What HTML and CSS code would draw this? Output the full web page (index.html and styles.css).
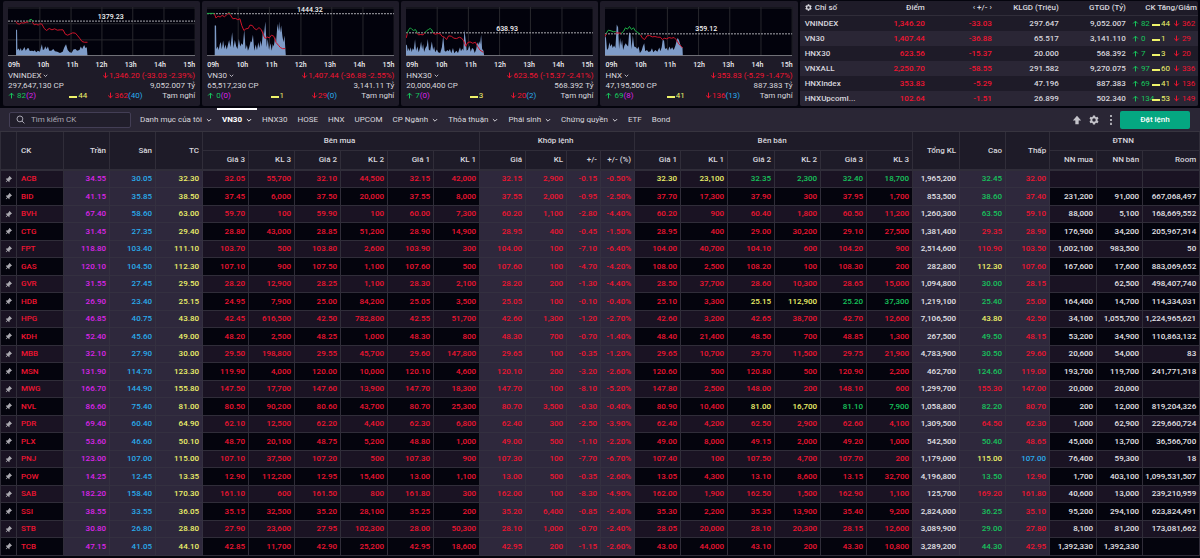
FILE: index.html
```html
<!DOCTYPE html>
<html lang="vi">
<head>
<meta charset="utf-8">
<meta name="viewport" content="width=device-width, initial-scale=1">
<title>Bảng giá VN30</title>
<link rel="stylesheet" href="styles.css">
</head>
<body>
<svg class="sprite" aria-hidden="true">
  <symbol id="up" viewBox="0 0 12 12"><path d="M6 11V2M2 6l4-4 4 4" fill="none" stroke="currentColor" stroke-width="1.7"/></symbol>
  <symbol id="down" viewBox="0 0 12 12"><path d="M6 1v9M2 6l4 4 4-4" fill="none" stroke="currentColor" stroke-width="1.7"/></symbol>
  <symbol id="chevron" viewBox="0 0 10 10"><path d="M1.500 3.500L5 7l3.500-3.500" fill="none" stroke="currentColor" stroke-width="1.600"/></symbol>
  <symbol id="pin" viewBox="0 0 24 24"><path transform="rotate(45 12 12)" d="M17 12V4h1V1H6v3h1v8l-3 3v2h6.800v7h2.400v-7H20v-2z" fill="currentColor"/></symbol>
  <symbol id="gear" viewBox="0 0 24 24"><path fill-rule="evenodd" fill="currentColor" d="M9.500 1h5l.7 3.300 1.900 1.100 3.200-1.100 2.500 4.300L20.300 11v2l2.500 2.400-2.500 4.300-3.200-1.100-1.900 1.100-.7 3.300h-5l-.7-3.300-1.900-1.100-3.200 1.100-2.500-4.300L3.700 13v-2L1.200 8.600l2.500-4.300 3.200 1.100 1.900-1.100zM12 7.800a4.200 4.200 0 1 0 0 8.400 4.200 4.200 0 0 0 0-8.400z"/></symbol>
</svg>

<header class="overview">
  <section class="card">
    <div class="chart">
      <svg viewBox="23 20 558 146" preserveAspectRatio="none">
        <path class="grid" d="M23 23H581M23 70H581M23 118H581M118 20V165M211 20V165M303 20V165M395 20V165M488 20V165M581 20V165"/>
        <path class="volume" d="M47 165V88L50 88 51 148 55 144 58 150 61 142 64 151 68 147 72 139 76 150 80 144 84 142 88 151 95 150 99 152 103 149 107 155 112 150 118 153 121 142 124 131 127 148 131 146 134 137 138 146 142 138 146 150 152 150 158 145 163 152 170 153 178 157 186 153 191 140 196 131 201 148 207 155 213 156 218 147 224 145 229 150 236 148 240 138 244 145 250 133 254 142 258 140 260 165Z"/>
        <path class="reference" d="M23 62H581"/>
        <path class="fall" d="M47 63L51 70 57 71 63 67 70 68 77 65 84 65M96 65L101 73 107 71 113 74 118 70 124 71 131 84 138 90 146 84 154 88 162 85 170 89 179 88 187 88 194 101 201 104 209 100 216 97 224 98 231 106 238 115 244 123 251 125 260 125"/>
        <path class="rise" d="M83 63L88 58 93 57 97 62"/>
        <path class="axis" d="M23 165H581"/>
      </svg>
      <span class="level level-1">1379.23</span>
    </div>
    <div class="hours"><span>09h</span><span>10h</span><span>11h</span><span>12h</span><span>13h</span><span>14h</span><span>15h</span></div>
    <div class="line"><button type="button" class="picker">VNINDEX <svg class="tiny"><use href="#chevron"/></svg></button><span class="r"><svg class="arrow"><use href="#down"/></svg>1,346.20 (-33.03 -2.39%)</span></div>
    <div class="line"><span>297,647,130 CP</span><span>9,052.007 Tỷ</span></div>
    <div class="breadth"><span class="g"><svg class="arrow"><use href="#up"/></svg> 82<span class="m">(2)</span></span><span class="y"><i class="bar"></i>44</span><span class="r"><svg class="arrow"><use href="#down"/></svg>362<span class="b">(40)</span></span><span>Tạm nghỉ</span></div>
  </section>

  <section class="card">
    <div class="chart">
      <svg viewBox="622 20 558 146" preserveAspectRatio="none">
        <path class="grid" d="M622 23H1180M715 20V165M808 20V165M902 20V165M994 20V165M1087 20V165M1180 20V165"/>
        <path class="volume" d="M645 165V75L649 75 650 145 654 138 657 148 660 132 663 124 666 146 670 120 674 145 677 132 681 147 685 130 688 118 692 140 697 95 701 142 705 118 709 137 713 145 717 115 721 138 725 128 729 133 733 88 737 146 741 133 744 150 748 140 752 122 755 125 759 103 763 150 767 132 771 148 775 125 778 142 782 120 785 138 789 86 791 110 796 63 800 140 803 115 807 148 811 128 815 150 818 130 821 138 825 110 828 125 832 70 835 92 837 63 840 96 843 75 847 108 850 125 853 105 857 165Z"/>
        <path class="reference" d="M622 40H1180"/>
        <path class="rise" d="M622 39H644M684 39L688 36 692 40"/>
        <path class="fall" d="M644 40L649 53 655 47 661 50 667 45 674 49 681 43 687 38 692 44 699 55 707 54 714 58 720 55 726 76 732 90 738 85 745 84 750 74 757 75 763 84 770 88 777 81 784 88 790 102 795 114 801 109 808 112 814 104 821 107 828 126 835 134 841 141 847 144 855 144"/>
        <path class="axis" d="M622 165H1180"/>
      </svg>
      <span class="level level-2">1444.32</span>
    </div>
    <div class="hours"><span>09h</span><span>10h</span><span>11h</span><span>12h</span><span>13h</span><span>14h</span><span>15h</span></div>
    <div class="line"><button type="button" class="picker">VN30 <svg class="tiny"><use href="#chevron"/></svg></button><span class="r"><svg class="arrow"><use href="#down"/></svg>1,407.44 (-36.88 -2.55%)</span></div>
    <div class="line"><span>65,517,230 CP</span><span>3,141.11 Tỷ</span></div>
    <div class="breadth"><span class="g"><svg class="arrow"><use href="#up"/></svg> 0<span class="m">(0)</span></span><span class="y"><i class="bar"></i>1</span><span class="r"><svg class="arrow"><use href="#down"/></svg>29<span class="b">(0)</span></span><span>Tạm nghỉ</span></div>
  </section>

  <section class="card">
    <div class="chart">
      <svg viewBox="22 20 558 146" preserveAspectRatio="none">
        <path class="grid" d="M22 23H580M115 20V165M208 20V165M301 20V165M393 20V165M487 20V165M580 20V165"/>
        <path class="volume" d="M22 165V132L25 135 27 152 30 142 33 152 36 140 39 154 42 143 45 148 49 116 52 150 56 138 60 155 64 140 67 123 70 146 73 130 76 154 80 142 84 136 87 115 90 147 94 150 99 123 103 148 106 138 109 155 114 147 118 155 124 157 129 140 133 106 137 150 141 153 145 148 149 152 153 145 157 158 162 142 166 158 172 150 177 157 183 140 186 152 190 144 193 150 196 88 200 120 203 150 207 147 211 135 215 153 219 142 223 145 227 157 231 147 235 125 238 133 240 122 243 130 246 103 249 145 253 150 255 165Z"/>
        <path class="reference" d="M22 97H580"/>
        <path class="fall" d="M23 112L26 99M54 97L59 103 66 102 73 103 78 97M102 97L109 101 117 99 124 100 130 108 137 110 143 117 149 106 157 107 165 113 173 114 181 110 188 113 194 121 200 137 206 126 213 124 221 128 229 125 235 137 243 149 253 155"/>
        <path class="rise" d="M26 97L30 88 35 82 40 87 45 90 50 87 56 97M78 97L83 91 89 87 94 84 99 88 102 97"/>
        <path class="axis" d="M22 165H580"/>
      </svg>
      <span class="level level-3">638.93</span>
    </div>
    <div class="hours"><span>09h</span><span>10h</span><span>11h</span><span>12h</span><span>13h</span><span>14h</span><span>15h</span></div>
    <div class="line"><button type="button" class="picker">HNX30 <svg class="tiny"><use href="#chevron"/></svg></button><span class="r"><svg class="arrow"><use href="#down"/></svg>623.56 (-15.37 -2.41%)</span></div>
    <div class="line"><span>20,000,400 CP</span><span>568.392 Tỷ</span></div>
    <div class="breadth"><span class="g"><svg class="arrow"><use href="#up"/></svg> 7<span class="m">(0)</span></span><span class="y"><i class="bar"></i>3</span><span class="r"><svg class="arrow"><use href="#down"/></svg>20<span class="b">(2)</span></span><span>Tạm nghỉ</span></div>
  </section>

  <section class="card">
    <div class="chart">
      <svg viewBox="620 20 558 146" preserveAspectRatio="none">
        <path class="grid" d="M620 23H1178M713 20V165M806 20V165M899 20V165M992 20V165M1085 20V165M1178 20V165"/>
        <path class="volume" d="M620 165V105L623 112 626 148 630 142 633 125 636 138 640 130 643 142 647 135 651 142 655 72 659 80 662 145 665 112 668 135 671 118 674 148 678 135 682 128 685 133 689 138 692 95 696 100 699 145 703 105 707 138 712 140 716 145 720 138 724 157 729 150 733 137 737 128 740 152 745 148 750 154 756 152 760 143 764 155 770 148 776 153 782 141 785 152 789 140 792 118 796 120 799 145 803 142 808 150 812 138 816 147 820 140 825 148 830 135 834 118 837 112 841 120 844 130 847 138 851 140 852 165Z"/>
        <path class="reference" d="M620 100H1178"/>
        <path class="rise" d="M623 99L630 89 638 91 646 94 652 93M668 99L675 93 681 82 687 86 693 78 699 87 705 82 711 92 718 96 726 103"/>
        <path class="fall" d="M620 108L624 100M652 97L668 98M726 103L731 112 738 117 745 106 753 105 761 109 769 108 777 110 785 110 791 117 797 113 804 115 811 111 818 113 826 111 833 118 840 130 847 137 851 142"/>
        <path class="axis" d="M620 165H1178"/>
      </svg>
      <span class="level level-3">359.12</span>
    </div>
    <div class="hours"><span>09h</span><span>10h</span><span>11h</span><span>12h</span><span>13h</span><span>14h</span><span>15h</span></div>
    <div class="line"><button type="button" class="picker">HNX <svg class="tiny"><use href="#chevron"/></svg></button><span class="r"><svg class="arrow"><use href="#down"/></svg>353.83 (-5.29 -1.47%)</span></div>
    <div class="line"><span>47,195,500 CP</span><span>887.383 Tỷ</span></div>
    <div class="breadth"><span class="g"><svg class="arrow"><use href="#up"/></svg> 69<span class="m">(8)</span></span><span class="y"><i class="bar"></i>41</span><span class="r"><svg class="arrow"><use href="#down"/></svg>136<span class="b">(13)</span></span><span>Tạm nghỉ</span></div>
  </section>

  <section class="card summary">
    <table class="indices">
      <colgroup><col class="i-name"><col class="i-num"><col class="i-num"><col class="i-num"><col class="i-num"><col class="i-last"></colgroup>
      <thead><tr><th class="start"><svg class="arrow gap"><use href="#gear"/></svg>Chỉ số</th><th>Điểm</th><th>‹ +/- ›</th><th>KLGD (Triệu)</th><th>GTGD (Tỷ)</th><th class="flush">CK Tăng/Giảm</th></tr></thead>
      <tbody id="indices"></tbody>
    </table>
  </section>
</header>

<nav class="toolbar">
  <label class="search"><svg viewBox="0 0 12 12"><circle cx="5.200" cy="5.200" r="3.900"/><path d="M8 8l3.200 3.200"/></svg><input type="text" placeholder="Tìm kiếm CK" aria-label="Tìm kiếm CK"></label>
  <div class="tabs">
    <button type="button">Danh mục của tôi<svg><use href="#chevron"/></svg></button>
    <button type="button" class="active">VN30<svg><use href="#chevron"/></svg></button>
    <a href="#hnx30">HNX30</a>
    <a href="#hose">HOSE</a>
    <a href="#hnx">HNX</a>
    <a href="#upcom">UPCOM</a>
    <button type="button">CP Ngành<svg><use href="#chevron"/></svg></button>
    <button type="button">Thỏa thuận<svg><use href="#chevron"/></svg></button>
    <button type="button">Phái sinh<svg><use href="#chevron"/></svg></button>
    <button type="button">Chứng quyền<svg><use href="#chevron"/></svg></button>
    <a href="#etf">ETF</a>
    <a href="#bond">Bond</a>
  </div>
  <div class="tools">
    <button type="button" aria-label="Thu gọn"><svg viewBox="0 0 12 12"><path d="M6 1l5 5.500H8V11H4V6.500H1z" fill="currentColor"/></svg></button>
    <button type="button" aria-label="Cài đặt"><svg><use href="#gear"/></svg></button>
    <button type="button" aria-label="Thêm"><svg viewBox="0 0 12 12"><path d="M5 0h2v2.500H5zM5 4.700h2v2.500H5zM5 9.400h2v2.500H5z" fill="currentColor"/></svg></button>
  </div>
  <button type="button" class="order">Đặt lệnh</button>
</nav>

<table class="board">
  <colgroup>
    <col class="w-pin"><col class="w-b"><col class="w-a"><col class="w-a"><col class="w-b">
    <col class="w-a"><col class="w-a"><col class="w-a"><col class="w-b"><col class="w-a"><col class="w-a">
    <col class="w-a"><col class="w-kl"><col class="w-diff"><col class="w-diff">
    <col class="w-a"><col class="w-b"><col class="w-b"><col class="w-a"><col class="w-a"><col class="w-a">
    <col class="w-b"><col class="w-a"><col class="w-low">
    <col class="w-b"><col class="w-a"><col class="w-room">
  </colgroup>
  <thead>
    <tr>
      <th rowspan="2"></th><th rowspan="2" class="start">CK</th><th rowspan="2">Trần</th><th rowspan="2">Sàn</th><th rowspan="2">TC</th>
      <th colspan="6" class="group">Bên mua</th><th colspan="4" class="group">Khớp lệnh</th><th colspan="6" class="group">Bên bán</th>
      <th rowspan="2">Tổng KL</th><th rowspan="2">Cao</th><th rowspan="2">Thấp</th><th colspan="3" class="group">ĐTNN</th>
    </tr>
    <tr>
      <th>Giá 3</th><th>KL 3</th><th>Giá 2</th><th>KL 2</th><th>Giá 1</th><th>KL 1</th>
      <th>Giá</th><th>KL</th><th>+/-</th><th>+/- (%)</th>
      <th>Giá 1</th><th>KL 1</th><th>Giá 2</th><th>KL 2</th><th>Giá 3</th><th>KL 3</th>
      <th>NN mua</th><th>NN bán</th><th>Room</th>
    </tr>
  </thead>
  <tbody id="board"></tbody>
</table>
<script src="board.js"></script>
</body>
</html>
```

FILE: styles.css
```css
:root {
  --page: #04040d;
  --card: #1e1b28;
  --raised: #2a2635;
  --line: #302d39;
  --text: #d8d7de;
  --red: #f01431;
  --green: #17c45c;
  --yellow: #eef26a;
  --magenta: #dd24ea;
  --blue: #29acec;
}

* { box-sizing: border-box; }

body {
  margin: 0;
  background: var(--page);
  color: var(--text);
  font: 8px/10px Roboto, "Noto Sans", sans-serif;
}

button, input { font: inherit; color: inherit; background: none; border: 0; padding: 0; margin: 0; }
button { cursor: pointer; white-space: nowrap; }
a { color: inherit; text-decoration: none; }
table { border-spacing: 0; table-layout: fixed; width: 100%; }
.sprite { position: absolute; width: 0; height: 0; }

.r { color: var(--red); }
.g { color: var(--green); }
.y { color: var(--yellow); }
.m { color: var(--magenta); }
.b { color: var(--blue); }

/* Overview cards */
.overview {
  display: grid;
  grid-template-columns: repeat(4, minmax(0, 197fr)) minmax(0, 398fr);
  gap: 2px;
  padding: 1px 2px 2px 3px;
}
.card { background: var(--card); border-radius: 2px; padding: 6px 5px 5px; white-space: nowrap; }
.chart { position: relative; background: #02020c; height: 49px; }
.chart svg { display: block; width: 100%; height: 100%; }
.chart path { fill: none; stroke-width: 1px; vector-effect: non-scaling-stroke; }
.chart .grid { stroke: #28282e; }
.chart .axis { stroke: #85858c; }
.chart .reference { stroke: #aaaab0; stroke-dasharray: 2 1; }
.chart .volume { fill: #7f9cc8; stroke: none; }
.chart .fall { stroke: #d0142a; }
.chart .rise { stroke: #1cae45; }
.level { position: absolute; left: 48%; color: #f4f4f6; font-size: 7px; font-weight: 500; line-height: 8px; }
.level-1 { top: 6px; }
.level-2 { top: -1px; }
.level-3 { top: 18px; }
.hours { display: flex; justify-content: space-between; padding: 4px 0 1px; color: #ececf0; font-size: 7px; font-weight: 500; }
.line { display: flex; justify-content: space-between; }
.picker { line-height: 10px; }
.arrow { width: 7px; height: 7px; vertical-align: -1px; }
.gap { margin-right: 3px; }
.tiny { width: 5px; height: 5px; }
.breadth { display: grid; grid-template-columns: repeat(4, 1fr); text-align: center; }
.breadth > :first-child { text-align: left; }
.breadth > :last-child { text-align: right; }
.bar { display: inline-block; width: 8px; height: 2px; margin-right: 1px; background: var(--yellow); }

/* Index summary */
.card.summary { padding: 0; overflow: hidden; }
.i-name { width: 60px; }
.i-num { width: 67px; }
.i-last { width: 70px; }
.indices th, .indices td { height: 15px; padding: 0 2px 0 0; text-align: right; font-weight: 500; }
.indices th { border-bottom: 1px solid var(--line); }
.indices .start { padding-left: 5px; text-align: left; }
.indices .flush { padding-right: 1px; }
.indices tbody tr:nth-child(even) { background: var(--raised); }
.indices td:last-child { padding: 0 0 0 4px; font-weight: 400; }
.moves { display: grid; grid-template-columns: 20px 21px 1fr; text-align: left; }

/* Toolbar */
.toolbar {
  display: flex;
  align-items: center;
  height: 24px;
  padding: 0 10px 0 9px;
  background: var(--raised);
  border-bottom: 1px solid #37343f;
}
.search { display: flex; align-items: center; gap: 6px; width: 122px; height: 16px; padding: 0 6px; border: 1px solid #433e55; border-radius: 2px; background: #211e2b; }
.search svg { flex: none; width: 9px; height: 9px; fill: none; stroke: #aaa8b4; stroke-width: 1.3px; }
.search input { flex: 1; min-width: 0; outline: 0; }
.search input::placeholder { color: #aaa8b4; opacity: 1; }
.tabs { display: flex; align-self: stretch; padding-left: 4px; }
.tabs > * { display: flex; align-items: center; gap: 4px; padding: 0 5px; white-space: nowrap; border-top: 2px solid transparent; border-bottom: 2px solid transparent; }
.tabs svg { width: 6px; height: 6px; }
.tabs .active { color: #fff; font-weight: 700; border-top-color: #fff; }
.tools { display: flex; gap: 7px; margin-left: auto; margin-right: 4px; color: #c4c3ca; }
.tools svg { display: block; width: 10px; height: 10px; }
.order { width: 70px; height: 18px; border-radius: 2px; background: #05a781; color: #fff; font-weight: 500; }

/* Price board */
.board { border-left: 1px solid var(--line); }
.w-pin { width: 16px; }
.w-a { width: 46px; }
.w-b { width: 47px; }
.w-kl { width: 41px; }
.w-diff { width: 34px; }
.w-low { width: 44px; }
.w-room { width: 57px; }
.board th, .board td {
  padding: 0 3px 0 0;
  border: solid var(--line);
  border-width: 0 1px 1px 0;
  text-align: right;
  white-space: nowrap;
}
.board th { height: 20px; background: var(--card); font-weight: 500; border-bottom-width: 2px; }
.board .group { height: 19px; text-align: center; border-bottom-width: 1px; }
.board .start { padding-left: 4px; text-align: left; }
.board td { height: 17px; line-height: 16px; font-weight: 500; }
.board tr:nth-child(even) td { height: 18px; }
.board tbody tr:nth-child(odd) { background: #1a1323; }
.board tbody .tint { background: #2e283c; border-color: #343040; }
.board .pin { padding: 0; text-align: center; color: #aaa9b0; }
.board .pin svg { display: block; width: 7px; height: 7px; margin: auto; }
.board .w { color: #e4e3e8; }
```

FILE: board.js
```javascript
const indices = [
  "VNINDEX|1,346.20|-33.03|297.647|9,052.007|82|44|362",
  "VN30|1,407.44|-36.88|65.517|3,141.110|0|1|29",
  "HNX30|623.56|-15.37|20.000|568.392|7|3|20",
  "VNXALL|2,250.70|-58.55|291.582|9,270.075|97|60|336",
  "HNXIndex|353.83|-5.29|47.196|887.383|69|41|136",
  "HNXUpcomI...|102.64|-1.51|26.899|502.340|134|53|149"
];

document.getElementById("indices").innerHTML = indices.map(line => {
  const [name, point, change, volume, value, up, flat, down] = line.split("|");
  return `<tr><td class="start">${name}</td><td class="r">${point}</td><td class="r">${change}</td>` +
    `<td>${volume}</td><td>${value}</td><td><div class="moves">` +
    `<span class="g"><svg class="arrow"><use href="#up"/></svg> ${up}</span>` +
    `<span class="y"><i class="bar"></i>${flat}</span>` +
    `<span class="r"><svg class="arrow"><use href="#down"/></svg> ${down}</span></div></td></tr>`;
}).join("");

/* Symbol, ceiling, floor, reference, bids, matched, asks, total, high, low, foreign; "-" is empty */
const stocks = `
ACB 34.55 30.05 32.30 32.05 55,700 32.10 44,500 32.15 42,000 32.15 2,900 -0.15 -0.50% 32.30 23,100 32.35 2,300 32.40 18,700 1,965,200 32.45 32.00 - - -
BID 41.15 35.85 38.50 37.45 6,000 37.50 20,000 37.55 8,000 37.55 2,000 -0.95 -2.50% 37.70 17,300 37.90 300 37.95 1,700 853,500 38.60 37.40 231,200 91,000 667,068,497
BVH 67.40 58.60 63.00 59.70 100 59.90 100 60.00 7,300 60.20 1,100 -2.80 -4.40% 60.20 900 60.40 1,800 60.50 11,200 1,260,300 63.50 59.10 88,000 5,100 168,669,552
CTG 31.45 27.35 29.40 28.80 43,000 28.85 51,200 28.90 14,900 28.95 400 -0.45 -1.50% 28.95 400 29.00 30,200 29.10 27,500 1,381,400 29.35 28.90 176,900 34,200 205,967,514
FPT 118.80 103.40 111.10 103.70 500 103.80 2,600 103.90 300 104.00 100 -7.10 -6.40% 104.00 40,700 104.10 600 104.20 900 2,514,600 110.90 103.50 1,002,100 983,500 50
GAS 120.10 104.50 112.30 107.10 900 107.50 1,100 107.60 500 107.60 100 -4.70 -4.20% 108.00 2,500 108.20 100 108.30 200 282,800 112.30 107.60 167,600 17,600 883,069,652
GVR 31.55 27.45 29.50 28.20 12,900 28.25 1,100 28.30 2,100 28.20 200 -1.30 -4.40% 28.50 37,700 28.60 10,300 28.65 15,000 1,094,800 30.00 28.15 - 62,500 498,407,740
HDB 26.90 23.40 25.15 24.95 7,900 25.00 84,200 25.05 3,500 25.05 100 -0.10 -0.40% 25.10 3,300 25.15 112,900 25.20 37,300 1,219,100 25.40 25.00 164,400 14,700 114,334,031
HPG 46.85 40.75 43.80 42.45 616,500 42.50 782,800 42.55 51,700 42.60 1,300 -1.20 -2.70% 42.60 3,200 42.65 38,700 42.70 12,600 7,106,500 43.80 42.50 34,100 1,055,700 1,224,965,621
KDH 52.40 45.60 49.00 48.20 2,500 48.25 1,000 48.30 800 48.30 700 -0.70 -1.40% 48.40 21,400 48.50 700 48.85 1,300 267,500 49.50 48.15 53,200 34,900 110,863,132
MBB 32.10 27.90 30.00 29.50 198,800 29.55 45,700 29.60 147,800 29.65 100 -0.35 -1.20% 29.65 10,700 29.70 11,500 29.75 21,900 4,783,900 30.50 29.60 20,600 54,000 83
MSN 131.90 114.70 123.30 119.90 4,000 120.00 10,000 120.10 4,600 120.10 200 -3.20 -2.60% 120.60 500 120.80 500 120.90 2,200 462,700 124.60 119.00 193,700 119,700 241,771,518
MWG 166.70 144.90 155.80 147.50 17,700 147.60 13,900 147.70 18,300 147.70 100 -8.10 -5.20% 147.80 2,500 148.00 200 148.10 600 1,299,700 155.30 147.00 20,000 20,000 -
NVL 86.60 75.40 81.00 80.50 90,200 80.60 43,700 80.70 25,300 80.70 3,500 -0.30 -0.40% 80.90 10,400 81.00 16,700 81.10 7,900 1,058,800 82.20 80.70 200 12,000 819,204,326
PDR 69.40 60.40 64.90 62.10 12,500 62.20 4,400 62.30 6,800 62.40 300 -2.50 -3.90% 62.40 4,200 62.50 2,900 62.60 4,100 1,309,500 64.50 62.30 1,000 62,900 229,660,724
PLX 53.60 46.60 50.10 48.70 20,100 48.75 5,200 48.80 1,000 49.00 500 -1.10 -2.20% 49.00 8,000 49.15 2,000 49.20 1,000 542,500 50.40 48.65 45,000 13,700 36,566,700
PNJ 123.00 107.00 115.00 107.10 37,500 107.20 500 107.30 900 107.30 100 -7.70 -6.70% 107.40 100 107.50 4,700 107.70 200 1,179,000 115.00 107.00 76,400 59,300 18
POW 14.25 12.45 13.35 12.90 112,200 12.95 15,400 13.00 1,100 13.00 500 -0.35 -2.60% 13.05 4,300 13.10 8,600 13.15 32,700 4,196,800 13.50 12.90 1,700 403,100 1,099,531,507
SAB 182.20 158.40 170.30 161.10 600 161.50 800 161.80 300 162.00 100 -8.30 -4.90% 162.00 1,900 162.50 1,500 162.90 1,100 125,700 169.20 161.80 40,600 13,000 239,210,959
SSI 38.55 33.55 36.05 35.15 32,500 35.20 28,100 35.25 200 35.20 6,400 -0.85 -2.40% 35.30 2,200 35.35 13,900 35.40 9,200 2,824,000 36.25 35.10 95,200 294,100 623,824,491
STB 30.80 26.80 28.80 27.90 23,600 27.95 102,300 28.00 50,300 28.10 1,000 -0.70 -2.40% 28.05 20,000 28.10 20,300 28.15 12,600 3,089,900 29.00 27.80 8,100 81,200 173,081,662
TCB 47.15 41.05 44.10 42.85 11,700 42.90 25,200 42.95 18,600 42.95 200 -1.15 -2.60% 43.00 44,000 43.10 200 43.30 10,800 3,289,200 44.30 42.95 1,392,330 1,392,330 -
`.trim().split("\n").map(line => line.split(" "));

function priceColour(price, floor, reference) {
  if (+price === +floor) return "b";
  if (+price === +reference) return "y";
  return +price > +reference ? "g" : "r";
}

function cellColour(row, i) {
  const tone = at => priceColour(row[at], row[2], row[3]);
  if (i === 0) return "start r";
  if (i <= 3) return ["m", "b", "y"][i - 1] + " tint";
  if (i <= 9) return tone(i - i % 2);
  if (i <= 13) return tone(10) + " tint";
  if (i <= 19) return tone(i - i % 2);
  if (i === 20) return "w tint";
  if (i <= 22) return tone(i) + " tint";
  return "w";
}

document.getElementById("board").innerHTML = stocks.map(row =>
  `<tr><td class="pin"><svg><use href="#pin"/></svg></td>` +
  row.map((value, i) => `<td class="${cellColour(row, i)}">${value === "-" ? "" : value}</td>`).join("") +
  `</tr>`
).join("");
```
